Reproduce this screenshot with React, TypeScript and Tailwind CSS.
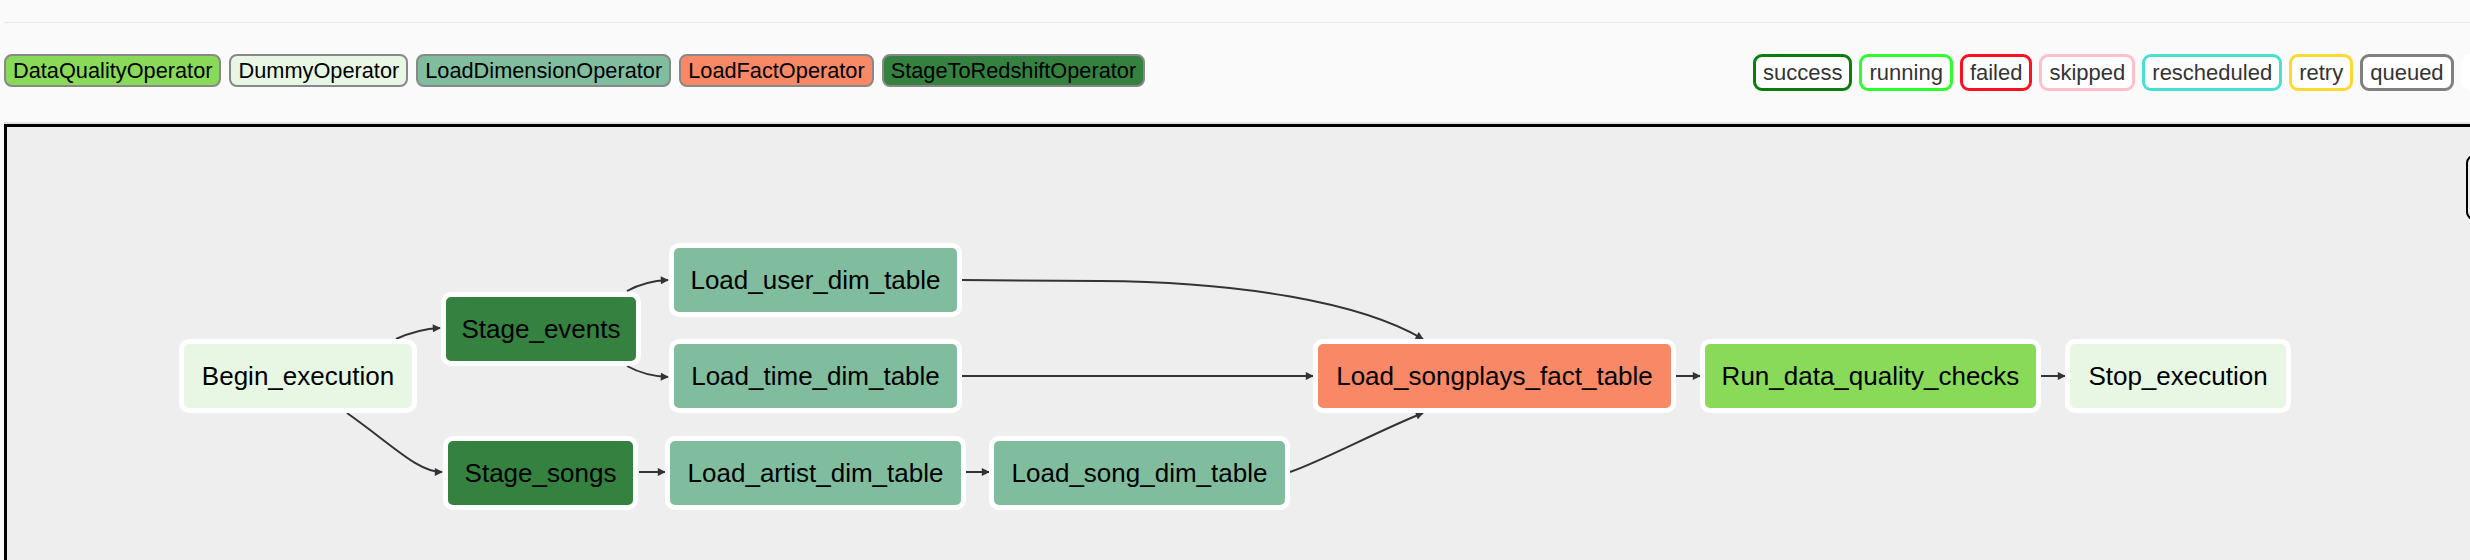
import React from 'react';

const operators = [
  { name: 'DataQualityOperator', bg: 'bg-[#89da59]' },
  { name: 'DummyOperator', bg: 'bg-[#e8f7e4]' },
  { name: 'LoadDimensionOperator', bg: 'bg-[#80bd9e]' },
  { name: 'LoadFactOperator', bg: 'bg-[#f98866]' },
  { name: 'StageToRedshiftOperator', bg: 'bg-[#358140]' },
];

const states = [
  { name: 'success', border: 'border-[#0a7d0a]' },
  { name: 'running', border: 'border-[#2cff2c]' },
  { name: 'failed', border: 'border-[#ff1020]' },
  { name: 'skipped', border: 'border-[#ffc0cb]' },
  { name: 'rescheduled', border: 'border-[#48e0d2]' },
  { name: 'retry', border: 'border-[#ffd830]' },
  { name: 'queued', border: 'border-[#808080]' },
  { name: 'no_status', border: 'border-white' },
];

// page coordinates of each task box (outer edge, incl. white stroke)
const tasks = [
  { label: 'Begin_execution', x: 179, y: 339, w: 238, bg: 'bg-[#e8f7e4]' },
  { label: 'Stage_events', x: 441, y: 292, w: 200, bg: 'bg-[#358140]' },
  { label: 'Stage_songs', x: 443, y: 436, w: 195, bg: 'bg-[#358140]' },
  { label: 'Load_user_dim_table', x: 669, y: 243, w: 293, bg: 'bg-[#80bd9e]' },
  { label: 'Load_time_dim_table', x: 669, y: 339, w: 293, bg: 'bg-[#80bd9e]' },
  { label: 'Load_artist_dim_table', x: 665, y: 436, w: 301, bg: 'bg-[#80bd9e]' },
  { label: 'Load_song_dim_table', x: 989, y: 436, w: 301, bg: 'bg-[#80bd9e]' },
  { label: 'Load_songplays_fact_table', x: 1313, y: 339, w: 363, bg: 'bg-[#f98866]' },
  { label: 'Run_data_quality_checks', x: 1700, y: 339, w: 341, bg: 'bg-[#89da59]' },
  { label: 'Stop_execution', x: 2065, y: 339, w: 226, bg: 'bg-[#e8f7e4]' },
];

const edges = [
  'M396 339 Q418 329 440 328',
  'M347 413 C395 447 418 472 442 472',
  'M627 291 Q645 281 668 280',
  'M627 366 Q645 376 668 377',
  'M639 472 L665 472',
  'M962 280 L1100 281 C1240 282 1360 302 1423 339',
  'M962 376 L1313 376',
  'M966 472 L989 472',
  'M1290 472 C1320 462 1380 430 1423 413',
  'M1676 376 L1700 376',
  'M2041 376 L2065 376',
];

// graph box padding-box origin on the page
const OX = 7;
const OY = 127;

export default function App() {
  return (
    <div className="h-[560px] w-full overflow-hidden bg-[#fafafa] font-['Liberation_Sans',Arial,sans-serif]">
      <div className="w-[2700px]">
        <div className="ml-1 h-[23px] border-b border-[#e9e9e9]" />

        {/* Legend */}
        <div className="grid grid-cols-[1749px_auto] pl-1 pt-[31px]">
          <div className="flex items-start gap-2">
            {operators.map((op) => (
              <div
                key={op.name}
                className={`flex h-[33px] items-center rounded-lg border-2 border-[#888] px-[7px] text-[21.75px] leading-none text-black ${op.bg}`}
              >
                {op.name}
              </div>
            ))}
          </div>
          <div className="flex items-start gap-[7px]">
            {states.map((s) => (
              <div
                key={s.name}
                className={`flex h-[37px] items-center rounded-[9px] border-[3px] bg-white px-[7px] text-[22px] leading-none text-[#333] ${s.border}`}
              >
                {s.name}
              </div>
            ))}
          </div>
        </div>

        {/* Graph */}
        <div className="relative ml-1 mt-[33px] h-[440px] border-[3px] border-black bg-[#eeeeee] shadow-[0_-2px_0_#e2e2e2]">
          <svg
            className="absolute left-0 top-0"
            width={2600}
            height={440}
            viewBox={`${OX} ${OY} 2600 440`}
          >
            <defs>
              <marker
                id="arrow"
                viewBox="0 0 10 10"
                refX="9"
                refY="5"
                markerWidth="9"
                markerHeight="8"
                markerUnits="userSpaceOnUse"
                orient="auto"
              >
                <path d="M0,0 L10,5 L0,10 z" fill="#333" />
              </marker>
            </defs>
            {edges.map((d) => (
              <path key={d} d={d} fill="none" stroke="#333" strokeWidth={2} markerEnd="url(#arrow)" />
            ))}
          </svg>

          {tasks.map((t) => (
            <div
              key={t.label}
              className={`absolute flex h-[74px] items-center justify-center rounded-[10px] border-[5px] border-white text-[26px] leading-none text-black ${t.bg}`}
              style={{ left: t.x - OX, top: t.y - OY, width: t.w }}
            >
              {t.label}
            </div>
          ))}

          <div className="absolute left-[2459px] top-[28px] h-[65px] w-[80px] rounded-lg border-2 border-black" />
        </div>
      </div>
    </div>
  );
}
